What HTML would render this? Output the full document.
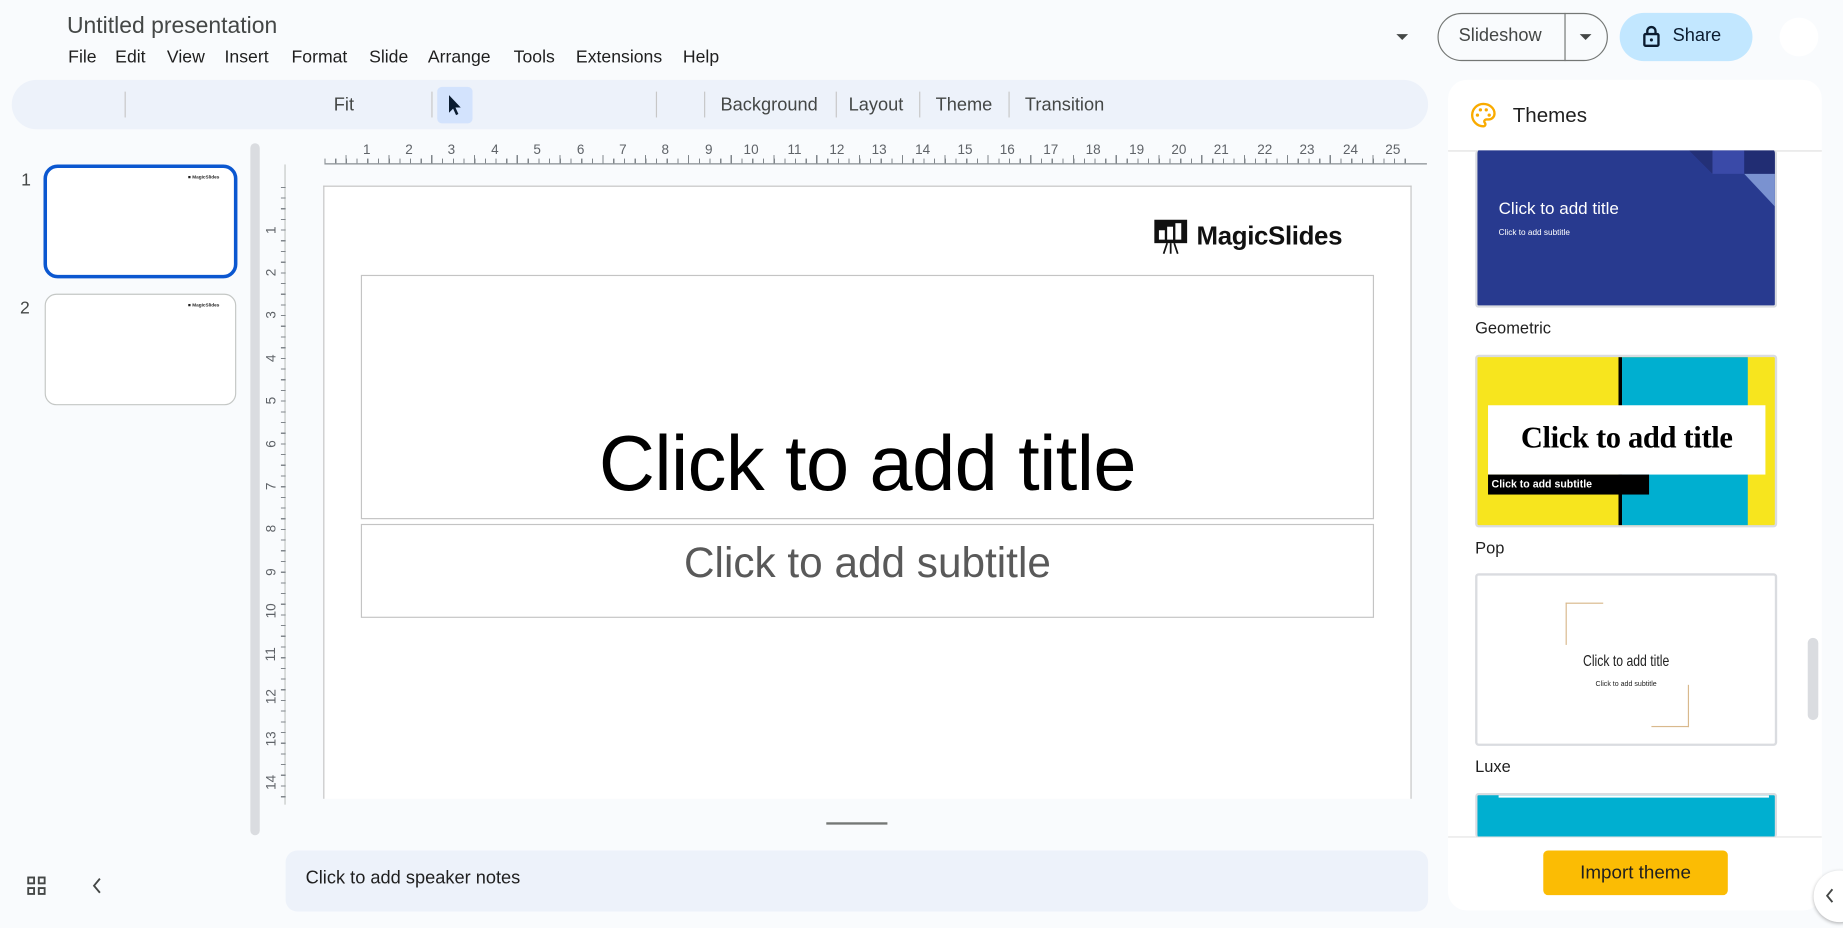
<!DOCTYPE html>
<html><head><meta charset="utf-8">
<style>
*{margin:0;padding:0;box-sizing:border-box}
html,body{width:1843px;height:928px;overflow:hidden;background:#f9fbfd}
#w{position:absolute;left:0;top:0;width:1568px;height:790px;transform:scale(1.17538,1.17468);transform-origin:0 0;font-family:"Liberation Sans",Arial,sans-serif;color:#1f1f1f}
.a{position:absolute}
.m{position:absolute;top:40px;font-size:15px;color:#1f1f1f}
.sep{position:absolute;top:78px;width:1px;height:22px;background:#c7c7c7}
.tb{position:absolute;top:81px;font-size:15.5px;color:#444746}
.hn{position:absolute;top:122px;font-size:11.5px;color:#5f6368;transform:translateX(-50%)}
.vn{position:absolute;left:228px;font-size:11.5px;color:#5f6368;transform:rotate(-90deg);transform-origin:center}
.card{position:absolute;left:1255px;width:257px;border:2px solid #dadce0;border-radius:3px;overflow:hidden}
.lbl{position:absolute;left:1255px;font-size:14px;color:#1f1f1f}
</style></head><body><div id="w">
<div class="a" style="left:57px;top:11px;font-size:19.5px;color:#444746">Untitled presentation</div>
<div class="m" style="left:58px">File</div><div class="m" style="left:98px">Edit</div><div class="m" style="left:142px">View</div><div class="m" style="left:191px">Insert</div><div class="m" style="left:248px">Format</div><div class="m" style="left:314px">Slide</div><div class="m" style="left:364px">Arrange</div><div class="m" style="left:437px">Tools</div><div class="m" style="left:490px">Extensions</div><div class="m" style="left:581px">Help</div>
<div class="a" style="left:1188px;top:29px;border-left:5px solid transparent;border-right:5px solid transparent;border-top:5px solid #444746"></div>
<div class="a" style="left:1223px;top:11px;width:145px;height:41px;border:1px solid #747775;border-radius:21px"></div>
<div class="a" style="left:1331px;top:11px;width:1px;height:41px;background:#747775"></div>
<div class="a" style="left:1241px;top:22px;font-size:15.5px;color:#444746">Slideshow</div>
<div class="a" style="left:1344px;top:29px;border-left:5px solid transparent;border-right:5px solid transparent;border-top:5px solid #444746"></div>
<div class="a" style="left:1378px;top:11px;width:113px;height:41px;background:#c2e7ff;border-radius:21px"></div>
<svg class="a" style="left:1396px;top:21px" width="18" height="20" viewBox="0 0 18 20"><rect x="3" y="8" width="12" height="10" rx="1" fill="none" stroke="#0b1c30" stroke-width="2"/><path d="M5.5 8V5.5a3.5 3.5 0 0 1 7 0V8" fill="none" stroke="#0b1c30" stroke-width="2"/><circle cx="9" cy="13" r="1.3" fill="#0b1c30"/></svg>
<div class="a" style="left:1423px;top:22px;font-size:15.5px;color:#0b1c30">Share</div>
<div class="a" style="left:1514px;top:15px;width:33px;height:33px;border-radius:50%;background:#fff"></div>

<div class="a" style="left:10px;top:68px;width:1205px;height:42px;background:#edf2fa;border-radius:21px"></div>
<div class="sep" style="left:106px"></div><div class="sep" style="left:367px"></div><div class="sep" style="left:558px"></div><div class="sep" style="left:599px"></div><div class="sep" style="left:711px"></div><div class="sep" style="left:782px"></div><div class="sep" style="left:858px"></div>
<div class="tb" style="left:284px">Fit</div>
<div class="a" style="left:372px;top:74px;width:30px;height:31px;background:#d3e3fd;border-radius:4px"></div>
<svg class="a" style="left:380px;top:80px" width="14" height="20" viewBox="0 0 14 20"><path d="M2 1 L2 16 L5.5 12.5 L8 18 L10 17 L7.5 11.5 L12 11.5 Z" fill="#0b1c30"/></svg>
<div class="tb" style="left:613px">Background</div><div class="tb" style="left:722px">Layout</div><div class="tb" style="left:796px">Theme</div><div class="tb" style="left:872px">Transition</div>

<div class="a" style="left:18px;top:145px;font-size:15px;color:#444746">1</div>
<div class="a" style="left:37px;top:140px;width:165px;height:97px;border:3px solid #0b57d0;border-radius:12px;background:#fff"></div>
<div class="a" style="left:160px;top:148px;font-size:4px;font-weight:bold">■ MagicSlides</div>
<div class="a" style="left:17px;top:254px;font-size:15px;color:#444746">2</div>
<div class="a" style="left:38px;top:250px;width:163px;height:95px;border:1px solid #c4c7c5;border-radius:10px;background:#fff"></div>
<div class="a" style="left:160px;top:257px;font-size:4px;font-weight:bold">■ MagicSlides</div>
<div class="a" style="left:213px;top:122px;width:8px;height:589px;background:#dadce0;border-radius:4px"></div>

<div class="a" style="left:276px;top:139px;width:938px;height:1px;background:#80868b"></div>
<div class="a" style="left:276px;top:135px;width:924px;height:4px;background:repeating-linear-gradient(90deg,#80868b 0 1px,transparent 1px 9.1px)"></div>
<div class="a" style="left:294.2px;top:132px;width:906px;height:7px;background:repeating-linear-gradient(90deg,#80868b 0 1px,transparent 1px 36.4px)"></div>
<div class="hn" style="left:312px">1</div><div class="hn" style="left:348px">2</div><div class="hn" style="left:384px">3</div><div class="hn" style="left:421px">4</div><div class="hn" style="left:457px">5</div><div class="hn" style="left:494px">6</div><div class="hn" style="left:530px">7</div><div class="hn" style="left:566px">8</div><div class="hn" style="left:603px">9</div><div class="hn" style="left:639px">10</div><div class="hn" style="left:676px">11</div><div class="hn" style="left:712px">12</div><div class="hn" style="left:748px">13</div><div class="hn" style="left:785px">14</div><div class="hn" style="left:821px">15</div><div class="hn" style="left:857px">16</div><div class="hn" style="left:894px">17</div><div class="hn" style="left:930px">18</div><div class="hn" style="left:967px">19</div><div class="hn" style="left:1003px">20</div><div class="hn" style="left:1039px">21</div><div class="hn" style="left:1076px">22</div><div class="hn" style="left:1112px">23</div><div class="hn" style="left:1149px">24</div><div class="hn" style="left:1185px">25</div>
<div class="a" style="left:242px;top:140px;width:1px;height:545px;background:#c4c7c5"></div>
<div class="a" style="left:239px;top:159px;width:4px;height:521px;background:repeating-linear-gradient(180deg,#80868b 0 1px,transparent 1px 9.1px)"></div>
<div class="vn" style="top:190px">1</div><div class="vn" style="top:226px">2</div><div class="vn" style="top:262px">3</div><div class="vn" style="top:299px">4</div><div class="vn" style="top:335px">5</div><div class="vn" style="top:372px">6</div><div class="vn" style="top:408px">7</div><div class="vn" style="top:444px">8</div><div class="vn" style="top:481px">9</div><div class="vn" style="top:514px;left:225px">10</div><div class="vn" style="top:551px;left:225px">11</div><div class="vn" style="top:587px;left:225px">12</div><div class="vn" style="top:623px;left:225px">13</div><div class="vn" style="top:660px;left:225px">14</div>

<div class="a" style="left:275px;top:158px;width:926px;height:522px;background:#fff;border:1px solid #c4c4c4;border-bottom:none"></div>
<svg class="a" style="left:982px;top:187px" width="30" height="30" viewBox="0 0 30 30"><rect x="0" y="0" width="28" height="20" fill="#111"/><rect x="4" y="9" width="5" height="8" fill="#fff"/><rect x="11" y="6" width="5" height="11" fill="#fff"/><rect x="18" y="3" width="5" height="14" fill="#fff"/><path d="M11 20 L8 29 M14 20 L14 29 M17 20 L20 29" stroke="#111" stroke-width="1.5"/></svg>
<div class="a" style="left:1018px;top:188px;font-size:22px;font-weight:bold;color:#111;letter-spacing:-0.3px">MagicSlides</div>
<div class="a" style="left:307px;top:234px;width:862px;height:208px;border:1px solid #c4c4c4"></div>
<div class="a" style="left:307px;top:356px;width:862px;text-align:center;font-size:66px;color:#000;letter-spacing:-0.5px">Click to add title</div>
<div class="a" style="left:307px;top:446px;width:862px;height:80px;border:1px solid #c4c4c4"></div>
<div class="a" style="left:307px;top:458px;width:862px;text-align:center;font-size:36px;color:#595959">Click to add subtitle</div>
<div class="a" style="left:703px;top:700px;width:52px;height:2px;background:#747775"></div>

<div class="a" style="left:243px;top:724px;width:972px;height:52px;background:#edf2fa;border-radius:10px"></div>
<div class="a" style="left:260px;top:739px;font-size:15.5px;color:#1f1f1f">Click to add speaker notes</div>
<svg class="a" style="left:23px;top:746px" width="16" height="16" viewBox="0 0 16 16" fill="none" stroke="#444746" stroke-width="1.6"><rect x="1" y="1" width="5" height="5"/><rect x="10" y="1" width="5" height="5"/><rect x="1" y="10" width="5" height="5"/><rect x="10" y="10" width="5" height="5"/></svg>
<svg class="a" style="left:78px;top:747px" width="10" height="14" viewBox="0 0 10 14"><path d="M7 1 L2 7 L7 13" fill="none" stroke="#444746" stroke-width="1.6"/></svg>

<div class="a" style="left:1232px;top:68px;width:318px;height:707px;background:#fff;border-radius:16px"></div>
<svg class="a" style="left:1250px;top:86px" width="24" height="24" viewBox="0 0 24 24"><path d="M12 2.5a9.5 9.5 0 0 0 0 19c1.2 0 1.8-.8 1.8-1.7 0-.5-.2-.9-.5-1.2-.3-.3-.5-.7-.5-1.2 0-.9.8-1.7 1.7-1.7h2a5 5 0 0 0 5-5C21.5 6.2 17.3 2.5 12 2.5z" fill="none" stroke="#f9ab00" stroke-width="2"/><circle cx="7" cy="12" r="1.4" fill="#f9ab00"/><circle cx="9.5" cy="7.5" r="1.4" fill="#f9ab00"/><circle cx="14.5" cy="7.5" r="1.4" fill="#f9ab00"/><circle cx="17" cy="12" r="1.4" fill="#f9ab00"/></svg>
<div class="a" style="left:1287px;top:88px;font-size:17.5px;color:#1f1f1f">Themes</div>
<div class="a" style="left:1232px;top:128px;width:318px;height:1px;background:#e0e0e0"></div>

<div class="card" style="top:128px;height:134px;border-top:none;background:#283a8f">
<svg class="a" style="left:0;top:0" width="257" height="134"><polygon points="180,0 200,20 200,0" fill="#233077"/><polygon points="200,20 218,0 200,0" fill="#7a92d0"/><rect x="200" y="0" width="27" height="20" fill="#3a4aa8"/><rect x="227" y="0" width="30" height="20" fill="#212d73"/><polygon points="227,20 257,20 257,52" fill="#7a92d0"/></svg>
<div class="a" style="left:18px;top:42px;font-size:14.5px;color:#fff">Click to add title</div>
<div class="a" style="left:18px;top:67px;font-size:7px;color:#fff">Click to add subtitle</div>
</div>
<div class="lbl" style="top:271px">Geometric</div>

<div class="card" style="top:302px;height:147px;background:#f7e51e">
<div class="a" style="left:120px;top:0;width:3px;height:147px;background:#000"></div>
<div class="a" style="left:123px;top:0;width:107px;height:147px;background:#00afd0"></div>
<div class="a" style="left:9px;top:41px;width:236px;height:59px;background:#fff"></div>
<div class="a" style="left:9px;top:54px;width:236px;text-align:center;font-family:'Liberation Serif',serif;font-weight:bold;font-size:26px;color:#000;letter-spacing:-0.3px">Click to add title</div>
<div class="a" style="left:9px;top:100px;width:137px;height:17px;background:#000;color:#fff;font-size:9px;font-weight:bold;padding:3px 3px">Click to add subtitle</div>
</div>
<div class="lbl" style="top:458px">Pop</div>

<div class="card" style="top:488px;height:147px;background:#fff">
<div class="a" style="left:75px;top:23px;width:32px;height:36px;border-left:1px solid #d9b98d;border-top:1px solid #d9b98d"></div>
<div class="a" style="left:148px;top:93px;width:32px;height:36px;border-right:1px solid #d9b98d;border-bottom:1px solid #d9b98d"></div>
<div class="a" style="left:0;top:65px;width:253px;text-align:center;font-size:13px;color:#222;transform:scaleX(.8)">Click to add title</div>
<div class="a" style="left:0;top:90px;width:253px;text-align:center;font-size:6px;color:#222">Click to add subtitle</div>
</div>
<div class="lbl" style="top:644px">Luxe</div>
<div class="card" style="top:675px;height:38px;background:#00afd0;border-bottom:none"><div class="a" style="left:18px;top:0;width:230px;height:2px;background:#fff"></div></div>
<div class="a" style="left:1232px;top:712px;width:318px;height:63px;background:#fff;border-top:1px solid #e0e0e0;border-radius:0 0 16px 16px"></div>
<div class="a" style="left:1538px;top:543px;width:9px;height:70px;background:#dadce0;border-radius:5px"></div>
<div class="a" style="left:1313px;top:724px;width:157px;height:38px;background:#fbbc04;border-radius:4px;text-align:center;line-height:39px;font-size:16px;color:#1f1f1f">Import theme</div>
<div class="a" style="left:1543px;top:741px;width:44px;height:44px;border-radius:50%;background:#fff;box-shadow:0 1px 3px rgba(0,0,0,.3)"></div>
<svg class="a" style="left:1553px;top:756px" width="8" height="13" viewBox="0 0 8 13"><path d="M6 1 L1.5 6.5 L6 12" fill="none" stroke="#444746" stroke-width="1.6"/></svg>
</div></body></html>
